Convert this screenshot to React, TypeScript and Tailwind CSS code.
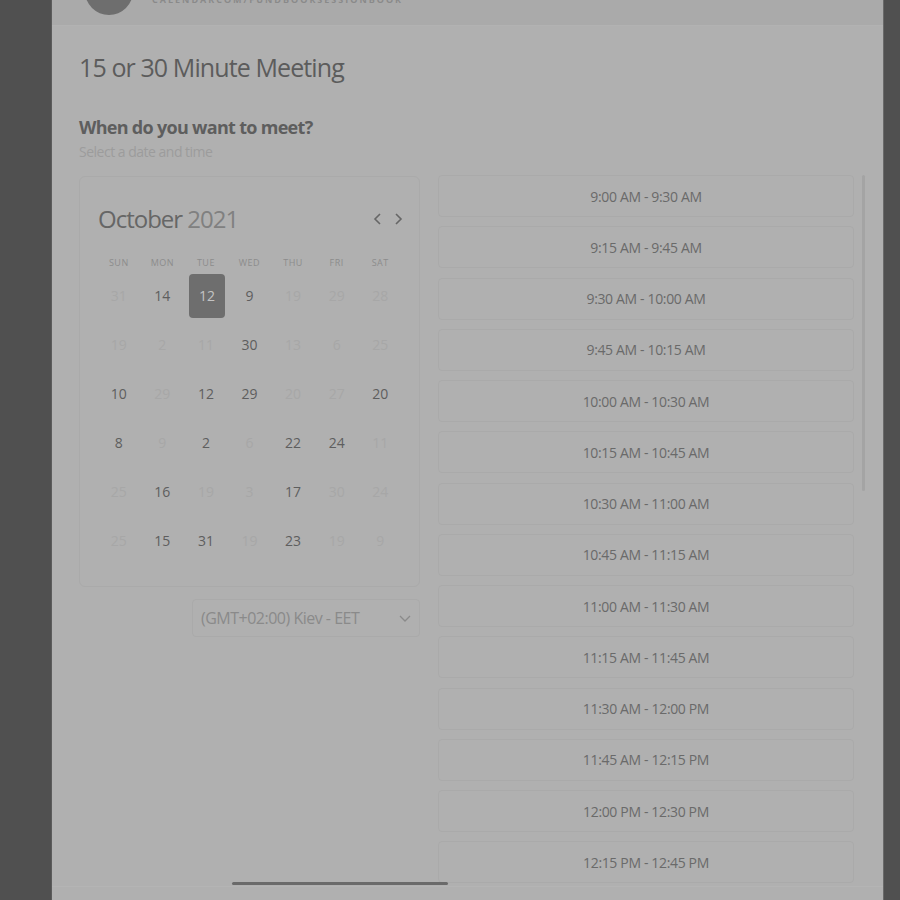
import React from "react";

type D = [string, boolean];
const rows: D[][] = [
  [["31", false], ["14", true], ["12", true], ["9", true], ["19", false], ["29", false], ["28", false]],
  [["19", false], ["2", false], ["11", false], ["30", true], ["13", false], ["6", false], ["25", false]],
  [["10", true], ["29", false], ["12", true], ["29", true], ["20", false], ["27", false], ["20", true]],
  [["8", true], ["9", false], ["2", true], ["6", false], ["22", true], ["24", true], ["11", false]],
  [["25", false], ["16", true], ["19", false], ["3", false], ["17", true], ["30", false], ["24", false]],
  [["25", false], ["15", true], ["31", true], ["19", false], ["23", true], ["19", false], ["9", false]],
];

const slots = [
  "9:00 AM - 9:30 AM",
  "9:15 AM - 9:45 AM",
  "9:30 AM - 10:00 AM",
  "9:45 AM - 10:15 AM",
  "10:00 AM - 10:30 AM",
  "10:15 AM - 10:45 AM",
  "10:30 AM - 11:00 AM",
  "10:45 AM - 11:15 AM",
  "11:00 AM - 11:30 AM",
  "11:15 AM - 11:45 AM",
  "11:30 AM - 12:00 PM",
  "11:45 AM - 12:15 PM",
  "12:00 PM - 12:30 PM",
  "12:15 PM - 12:45 PM",
];

const days = ["SUN", "MON", "TUE", "WED", "THU", "FRI", "SAT"];

export default function App() {
  return (
    <div
      className="flex h-[900px] w-[900px] overflow-hidden bg-[#505050]"
      style={{ fontFamily: '"Open Sans", "Noto Sans", sans-serif' }}
    >
      <div className="w-[51px] shrink-0" />
      <div className="relative flex h-full w-[832px] shrink-0 flex-col border-l border-[#5c5c5c] bg-[#b0b0b0]">
        {/* header */}
        <div className="relative h-[26px] shrink-0 overflow-hidden border-b border-[#b2b2b2] bg-[#aaaaaa]">
          <div className="absolute left-[33px] top-[-33px] h-[48px] w-[48px] rounded-full bg-[#6e6e6e]" />
          <div className="absolute left-[100px] top-[-7px] text-[9px] font-bold tracking-[2px] text-[#8a8a8a]">
            CALENDARCOM/FUNDBOOKSESSIONBOOK
          </div>
        </div>

        <div className="flex min-h-0 flex-1 flex-col pl-[27px]">
          <div className="mt-[24px] text-[25px] leading-[34px] tracking-[-0.9px] text-[#5c5c5c]">15 or 30 Minute Meeting</div>
          <div className="mt-[31px] text-[18px] font-bold leading-[24px] tracking-[-0.7px] text-[#5e5e5e]">When do you want to meet?</div>
          <div className="mt-[3px] text-[14px] leading-[20px] tracking-[-0.5px] text-[#9c9c9c]">Select a date and time</div>

          <div className="mt-[13px] flex min-h-0 flex-1 gap-[18px]">
            {/* left column */}
            <div className="flex w-[341px] shrink-0 flex-col pt-[1px]">
              <div className="rounded-[6px] border border-[#aaaaaa] px-[17px] pb-[21px] pt-[26px]">
                <div className="flex items-center justify-between pl-[1px]">
                  <div className="text-[24px] leading-[32px] tracking-[-1px]">
                    <span className="text-[#666666]">October</span>{" "}
                    <span className="text-[#808080]">2021</span>
                  </div>
                  <div className="mr-[-2px] flex items-center gap-[8px] text-[#666666]">
                    <svg width="12" height="14" viewBox="0 0 12 14">
                      <path d="M8 2 L3 7 L8 12" fill="none" stroke="#666" strokeWidth="1.6" />
                    </svg>
                    <svg width="12" height="14" viewBox="0 0 12 14">
                      <path d="M4 2 L9 7 L4 12" fill="none" stroke="#666" strokeWidth="1.6" />
                    </svg>
                  </div>
                </div>
                <div className="mt-[21px] grid grid-cols-7">
                  {days.map((d) => (
                    <div key={d} className="text-center text-[9px] leading-[14px] tracking-[0.5px] text-[#8c8c8c]">
                      {d}
                    </div>
                  ))}
                </div>
                <div className="mt-[1px] grid grid-cols-7">
                  {rows.flat().map(([n, dark], i) =>
                    i === 2 ? (
                      <div key={i} className="flex h-[49px] items-center justify-center">
                        <div className="flex h-[44px] w-[36px] translate-x-[1px] items-center justify-center rounded-[4px] bg-[#6e6e6e] text-[14px] text-[#c4c4c4]">
                          {n}
                        </div>
                      </div>
                    ) : (
                      <div
                        key={i}
                        className={
                          "flex h-[49px] items-center justify-center text-[14px] " +
                          (dark ? "text-[#5e5e5e]" : "text-[#a7a7a7]")
                        }
                      >
                        {n}
                      </div>
                    )
                  )}
                </div>
              </div>
              <div className="mt-[12px] flex justify-end">
                <div className="flex h-[38px] w-[228px] items-center justify-between rounded-[4px] border border-[#aaaaaa] pl-[8px] pr-[7px] text-[16px] tracking-[-0.5px] text-[#8a8a8a]">
                  <span>(GMT+02:00) Kiev - EET</span>
                  <svg width="14" height="10" viewBox="0 0 14 10">
                    <path d="M2 3 L7 8 L12 3" fill="none" stroke="#8a8a8a" strokeWidth="1.3" />
                  </svg>
                </div>
              </div>
            </div>

            {/* right column: slots */}
            <div className="flex min-h-0 flex-1 gap-[8px] overflow-hidden pr-[19px]">
              <div className="flex w-[416px] shrink-0 flex-col gap-[9.25px]">
                {slots.map((s) => (
                  <div
                    key={s}
                    className="flex h-[42px] shrink-0 items-center justify-center rounded-[4px] border border-[#aaaaaa] text-[14px] font-medium tracking-[-0.35px] text-[#6a6a6a]"
                  >
                    {s}
                  </div>
                ))}
              </div>
              <div className="h-[316px] w-[3px] shrink-0 rounded-full bg-[#a4a4a4]" />
            </div>
          </div>
        </div>

        <div className="h-[14px] shrink-0 border-t border-[#b4b4b4] bg-[#b0b0b0]" />
        <div className="absolute left-[180px] top-[882px] h-[3px] w-[216px] rounded-full bg-[#6a6a6a]" />
      </div>
      <div className="flex-1 border-l border-[#6a6a6a]" />
    </div>
  );
}
